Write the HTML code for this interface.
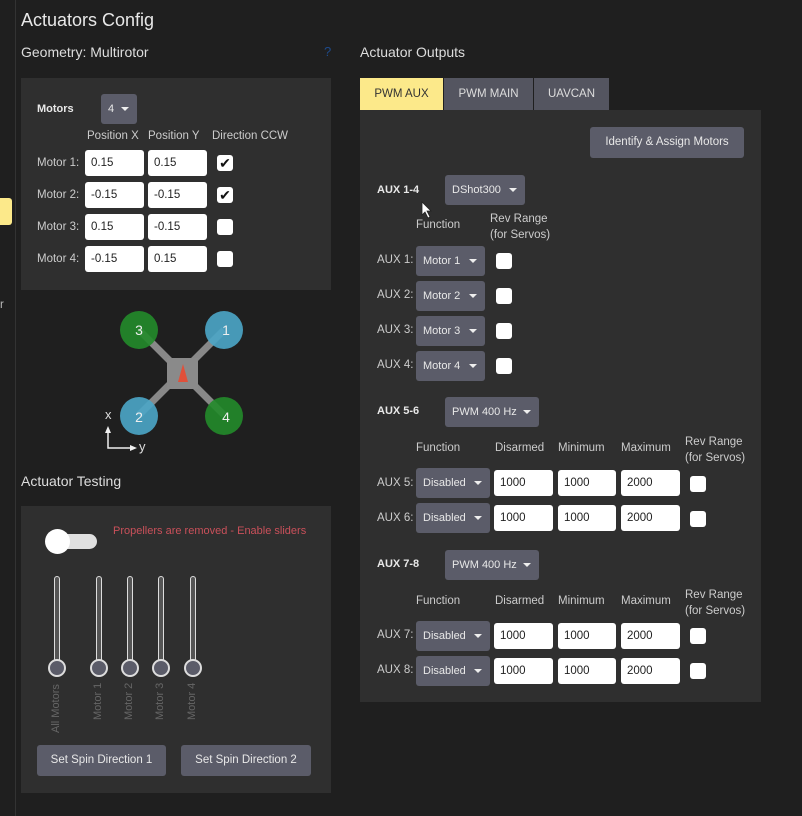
<!DOCTYPE html>
<html><head><style>
body{margin:0;width:802px;height:816px;background:#1f1f1f;font-family:"Liberation Sans",sans-serif;color:#ddd;position:relative;overflow:hidden;font-size:11.5px}
.a{position:absolute;white-space:nowrap}
.panel{position:absolute;background:#2f2f2f}
.inp{position:absolute;background:#fff;border-radius:3px;color:#222;font-size:11.5px;line-height:26px;padding-left:6px;box-sizing:border-box;height:26px}
.cb{position:absolute;width:16px;height:16px;background:#fff;border-radius:3px;color:#111;font-size:14px;line-height:16px;text-align:center}
.sel{position:absolute;background:#5b5c69;border-radius:3px;color:#e8e8e8;font-size:11px;box-sizing:border-box;padding-left:7px;height:30px;line-height:30px}
.sel:after{content:"";position:absolute;right:8px;top:13px;border-left:4px solid transparent;border-right:4px solid transparent;border-top:4px solid #eee}
.btn{position:absolute;background:#5b5c69;border-radius:3px;color:#e8e8e8;text-align:center;font-size:11.5px}
.lbl{color:#ccc;font-size:11.5px}
.b{font-weight:bold;color:#e8e8e8;font-size:11px}
.tab{position:absolute;top:78px;height:32px;line-height:32px;text-align:center;background:#545560;color:#ddd;font-size:11.5px}
.sl{position:absolute;width:4px;height:90px;background:#555;border:1px solid #ddd;border-radius:3px;top:576px}
.kn{position:absolute;width:14px;height:14px;border-radius:50%;background:#5b5c69;border:2px solid #ddd;top:659px}
.vl{position:absolute;transform:rotate(-90deg);transform-origin:left top;color:#666;font-size:11px}
</style></head><body>
<div class="a" style="left:15px;top:0;width:1px;height:816px;background:#333"></div>
<div class="a" style="left:0;top:198px;width:12px;height:27px;background:#fce98a;border-radius:0 3px 3px 0"></div>
<div class="a" style="left:0;top:299px;color:#bbb">r</div>
<div class="a" style="left:21px;top:10px;font-size:18px;color:#e8e8e8">Actuators Config</div>
<div class="a" style="left:21px;top:44px;font-size:14px;color:#ddd">Geometry: Multirotor</div>
<div class="a" style="left:324px;top:44px;color:#1f4a8a;font-size:13px">?</div>
<div class="panel" style="left:21px;top:78px;width:310px;height:212px"></div>
<div class="a b" style="left:37px;top:103px">Motors</div>
<div class="sel" style="left:101px;top:94px;width:36px;height:30px">4</div>
<div class="a lbl" style="left:87px;top:130px">Position X</div>
<div class="a lbl" style="left:148px;top:130px">Position Y</div>
<div class="a lbl" style="left:212px;top:130px">Direction CCW</div>
<div class="a lbl" style="left:37px;top:157px">Motor 1:</div><div class="inp" style="left:85px;top:150px;width:59px">0.15</div><div class="inp" style="left:148px;top:150px;width:59px">0.15</div><div class="cb" style="left:217px;top:155px">✔</div>
<div class="a lbl" style="left:37px;top:189px">Motor 2:</div><div class="inp" style="left:85px;top:182px;width:59px">-0.15</div><div class="inp" style="left:148px;top:182px;width:59px">-0.15</div><div class="cb" style="left:217px;top:187px">✔</div>
<div class="a lbl" style="left:37px;top:221px">Motor 3:</div><div class="inp" style="left:85px;top:214px;width:59px">0.15</div><div class="inp" style="left:148px;top:214px;width:59px">-0.15</div><div class="cb" style="left:217px;top:219px"></div>
<div class="a lbl" style="left:37px;top:253px">Motor 4:</div><div class="inp" style="left:85px;top:246px;width:59px">-0.15</div><div class="inp" style="left:148px;top:246px;width:59px">0.15</div><div class="cb" style="left:217px;top:251px"></div>
<svg class="a" style="left:90px;top:295px" width="200" height="170">
<line x1="49" y1="35" x2="134" y2="120" stroke="#888" stroke-width="7"/>
<line x1="134" y1="35" x2="49" y2="120" stroke="#888" stroke-width="7"/>
<rect x="77" y="63" width="31" height="31" fill="#8a8a8a"/>
<polygon points="93,69 88,87 98,87" fill="#e0503a"/>
<circle cx="49" cy="35" r="19" fill="#228b2a" opacity="0.9"/>
<circle cx="134" cy="35" r="19" fill="#4ba6c8" opacity="0.9"/>
<circle cx="49" cy="121" r="19" fill="#4ba6c8" opacity="0.9"/>
<circle cx="134" cy="121" r="19" fill="#228b2a" opacity="0.9"/>
<g fill="#eee" font-size="14" text-anchor="middle" font-family="Liberation Sans">
<text x="49" y="40">3</text><text x="136" y="40">1</text><text x="49" y="127">2</text><text x="136" y="127">4</text></g>
<polyline points="18,137 18,153 45,153" fill="none" stroke="#eee" stroke-width="1.5"/>
<polygon points="18,131 15,138 21,138" fill="#eee"/><polygon points="47,153 40,150 40,156" fill="#eee"/>
<text x="15" y="124" fill="#ddd" font-size="13" font-family="Liberation Sans">x</text>
<text x="49" y="156" fill="#ddd" font-size="13" font-family="Liberation Sans">y</text>
</svg>
<div class="a" style="left:21px;top:473px;font-size:14px;color:#ddd">Actuator Testing</div>
<div class="panel" style="left:21px;top:506px;width:310px;height:287px"></div>
<div class="a" style="left:56px;top:534px;width:41px;height:15px;background:#e0e0e0;border-radius:8px"></div>
<div class="a" style="left:45px;top:529px;width:25px;height:25px;background:#fff;border-radius:50%"></div>
<div class="a" style="left:113px;top:525px;color:#c9505a;font-size:11px">Propellers are removed - Enable sliders</div>
<div class="sl" style="left:54px"></div><div class="sl" style="left:96px"></div><div class="sl" style="left:127px"></div><div class="sl" style="left:158px"></div><div class="sl" style="left:190px"></div>
<div class="kn" style="left:48px"></div><div class="kn" style="left:90px"></div><div class="kn" style="left:121px"></div><div class="kn" style="left:152px"></div><div class="kn" style="left:184px"></div>
<div class="vl" style="left:50px;top:733px">All Motors</div>
<div class="vl" style="left:92px;top:720px">Motor 1</div>
<div class="vl" style="left:123px;top:720px">Motor 2</div>
<div class="vl" style="left:154px;top:720px">Motor 3</div>
<div class="vl" style="left:186px;top:720px">Motor 4</div>
<div class="btn" style="left:37px;top:745px;width:129px;height:31px;line-height:31px">Set Spin Direction 1</div>
<div class="btn" style="left:181px;top:745px;width:130px;height:31px;line-height:31px">Set Spin Direction 2</div>

<div class="a" style="left:360px;top:44px;font-size:14px;color:#ddd">Actuator Outputs</div>
<div class="tab" style="left:360px;width:83px;background:#fce98a;color:#333">PWM AUX</div>
<div class="tab" style="left:444px;width:89px">PWM MAIN</div>
<div class="tab" style="left:534px;width:75px">UAVCAN</div>
<div class="panel" style="left:360px;top:110px;width:401px;height:592px"></div>
<div class="btn" style="left:590px;top:127px;width:154px;height:31px;line-height:31px">Identify &amp; Assign Motors</div>
<div class="a b" style="left:377px;top:184px">AUX 1-4</div>
<div class="sel" style="left:445px;top:175px;width:80px">DShot300</div>
<div class="a lbl" style="left:416px;top:219px">Function</div>
<div class="a lbl" style="left:490px;top:211px;line-height:16px">Rev Range<br>(for Servos)</div>
<div class="a lbl" style="left:377px;top:254px">AUX 1:</div><div class="sel" style="left:416px;top:246px;width:69px">Motor 1</div><div class="cb" style="left:496px;top:253px"></div>
<div class="a lbl" style="left:377px;top:289px">AUX 2:</div><div class="sel" style="left:416px;top:281px;width:69px">Motor 2</div><div class="cb" style="left:496px;top:288px"></div>
<div class="a lbl" style="left:377px;top:324px">AUX 3:</div><div class="sel" style="left:416px;top:316px;width:69px">Motor 3</div><div class="cb" style="left:496px;top:323px"></div>
<div class="a lbl" style="left:377px;top:359px">AUX 4:</div><div class="sel" style="left:416px;top:351px;width:69px">Motor 4</div><div class="cb" style="left:496px;top:358px"></div>

<div class="a b" style="left:377px;top:405px">AUX 5-6</div>
<div class="sel" style="left:445px;top:397px;width:94px">PWM 400 Hz</div>
<div class="a lbl" style="left:416px;top:442px">Function</div><div class="a lbl" style="left:495px;top:442px">Disarmed</div><div class="a lbl" style="left:558px;top:442px">Minimum</div><div class="a lbl" style="left:621px;top:442px">Maximum</div>
<div class="a lbl" style="left:685px;top:434px;line-height:16px">Rev Range<br>(for Servos)</div>
<div class="a lbl" style="left:377px;top:477px">AUX 5:</div><div class="sel" style="left:416px;top:468px;width:74px">Disabled</div><div class="inp" style="left:494px;top:470px;width:59px">1000</div><div class="inp" style="left:558px;top:470px;width:58px">1000</div><div class="inp" style="left:621px;top:470px;width:59px">2000</div><div class="cb" style="left:690px;top:476px"></div>
<div class="a lbl" style="left:377px;top:512px">AUX 6:</div><div class="sel" style="left:416px;top:503px;width:74px">Disabled</div><div class="inp" style="left:494px;top:505px;width:59px">1000</div><div class="inp" style="left:558px;top:505px;width:58px">1000</div><div class="inp" style="left:621px;top:505px;width:59px">2000</div><div class="cb" style="left:690px;top:511px"></div>

<div class="a b" style="left:377px;top:558px">AUX 7-8</div>
<div class="sel" style="left:445px;top:550px;width:94px">PWM 400 Hz</div>
<div class="a lbl" style="left:416px;top:595px">Function</div><div class="a lbl" style="left:495px;top:595px">Disarmed</div><div class="a lbl" style="left:558px;top:595px">Minimum</div><div class="a lbl" style="left:621px;top:595px">Maximum</div>
<div class="a lbl" style="left:685px;top:587px;line-height:16px">Rev Range<br>(for Servos)</div>
<div class="a lbl" style="left:377px;top:629px">AUX 7:</div><div class="sel" style="left:416px;top:621px;width:74px">Disabled</div><div class="inp" style="left:494px;top:623px;width:59px">1000</div><div class="inp" style="left:558px;top:623px;width:58px">1000</div><div class="inp" style="left:621px;top:623px;width:59px">2000</div><div class="cb" style="left:690px;top:628px"></div>
<div class="a lbl" style="left:377px;top:664px">AUX 8:</div><div class="sel" style="left:416px;top:656px;width:74px">Disabled</div><div class="inp" style="left:494px;top:658px;width:59px">1000</div><div class="inp" style="left:558px;top:658px;width:58px">1000</div><div class="inp" style="left:621px;top:658px;width:59px">2000</div><div class="cb" style="left:690px;top:663px"></div>
<svg class="a" style="left:421px;top:201px" width="12" height="18"><path d="M1,1 L1,14 L4,11 L7,17 L9,16 L6,10 L10,10 Z" fill="#fff" stroke="#222" stroke-width="0.8"/></svg>
</body></html>
